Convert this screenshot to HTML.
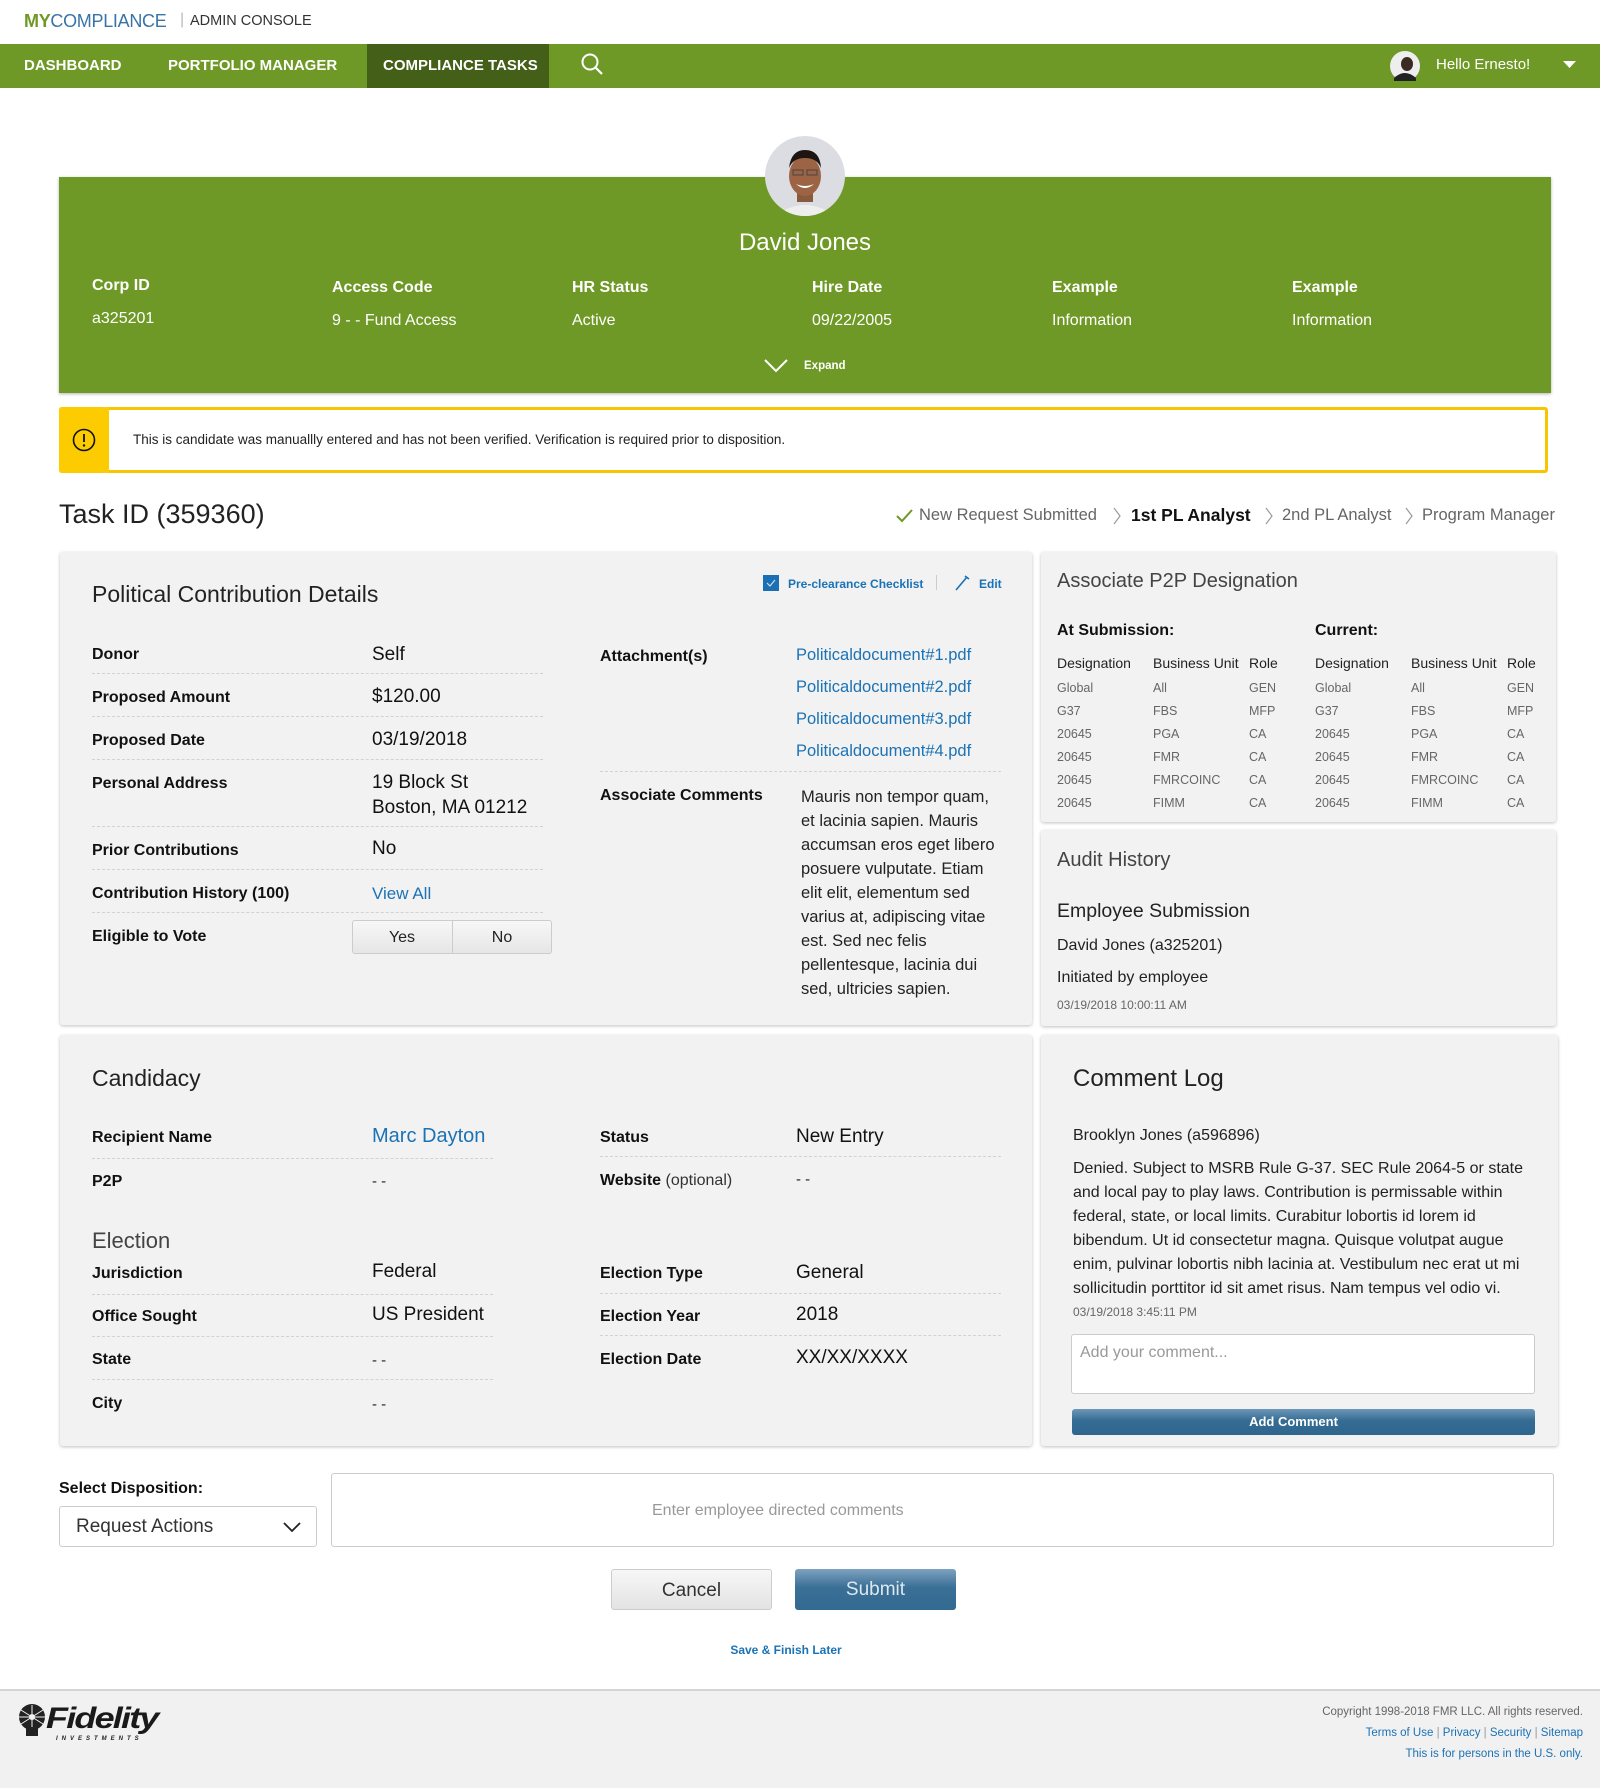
<!DOCTYPE html>
<html><head><meta charset="utf-8"><style>
*{margin:0;padding:0;box-sizing:border-box}
body{width:1600px;height:1788px;position:relative;background:#fff;font-family:"Liberation Sans",sans-serif;color:#222;overflow:hidden}
.a{position:absolute;white-space:nowrap;line-height:1}
.nav{position:absolute;left:0;top:44px;width:1600px;height:44px;background:#6f9926}
.nv{color:#fff;font-weight:bold;font-size:15px;top:15px}
.card{position:absolute;background:#f2f2f2;border-radius:3px;box-shadow:0 1px 3px rgba(0,0,0,.25)}
.lb{font-weight:bold;font-size:16px;color:#111}
.vl{font-size:19px;color:#111}
.dl{position:absolute;height:0;border-top:1px dashed #d2d2d2}
.gl{font-size:12.5px;color:#666}
.blue{color:#1b72b5}
.wl{color:#fff;font-size:16px}
</style></head><body>

<div class="a" style="left:24px;top:12px;font-size:18px;letter-spacing:-0.3px"><span style="color:#6f9926;font-weight:bold">MY</span><span style="color:#3a74a6">COMPLIANCE</span></div>
<div class="a" style="left:180px;top:12px;font-size:16px;color:#bbb">|</div>
<div class="a" style="left:190px;top:14px;font-size:14.5px;color:#333">ADMIN CONSOLE</div>

<div class="nav"></div>
<div class="a" style="left:367px;top:44px;width:182px;height:44px;background:#445f17"></div>
<div class="a nv" style="left:24px;top:58px">DASHBOARD</div>
<div class="a nv" style="left:168px;top:58px">PORTFOLIO MANAGER</div>
<div class="a nv" style="left:383px;top:58px">COMPLIANCE TASKS</div>
<svg class="a" style="left:580px;top:52px" width="26" height="26" viewBox="0 0 26 26"><circle cx="10" cy="10" r="7.5" fill="none" stroke="#fff" stroke-width="2"/><line x1="15.5" y1="15.5" x2="22" y2="22" stroke="#fff" stroke-width="2.2"/></svg>
<svg class="a" style="left:1390px;top:51px" width="30" height="30" viewBox="0 0 30 30"><circle cx="15" cy="15" r="15" fill="#eee"/><ellipse cx="17" cy="13" rx="6" ry="7" fill="#3a2a22"/><path d="M4 27 Q15 17 26 27 L26 30 L4 30Z" fill="#222"/></svg>
<div class="a" style="left:1436px;top:57px;font-size:15px;color:#fff">Hello Ernesto!</div>
<svg class="a" style="left:1563px;top:61px" width="13" height="8"><path d="M0 0 L13 0 L6.5 7Z" fill="#fff"/></svg>

<div class="a" style="left:59px;top:177px;width:1492px;height:216px;background:#6f9926;box-shadow:0 1px 3px rgba(0,0,0,.3)"></div>
<svg class="a" style="left:765px;top:136px" width="80" height="80" viewBox="0 0 80 80"><defs><clipPath id="c"><circle cx="40" cy="40" r="40"/></clipPath></defs><g clip-path="url(#c)"><rect width="80" height="80" fill="#dcdde3"/><path d="M10 80 Q40 58 70 80Z" fill="#eee"/><rect x="32" y="52" width="16" height="14" fill="#8a5a3c"/><ellipse cx="40" cy="40" rx="16" ry="20" fill="#9c6444"/><path d="M24 32 Q26 14 40 14 Q55 14 56 32 Q52 22 40 22 Q28 22 24 32Z" fill="#1e1512"/><path d="M31 48 Q40 56 49 48 Q40 52 31 48Z" fill="#fff"/><rect x="28" y="34" width="10" height="5" fill="none" stroke="#444" stroke-width="1"/><rect x="42" y="34" width="10" height="5" fill="none" stroke="#444" stroke-width="1"/></g></svg>
<div class="a" style="left:0;width:1610px;text-align:center;top:231px;font-size:24px;color:#fff">David Jones</div>
<div class="a wl" style="left:92px;top:278px;font-weight:bold">Corp ID</div>
<div class="a wl" style="left:92px;top:311px">a325201</div>
<div class="a wl" style="left:332px;top:280px;font-weight:bold">Access Code</div>
<div class="a wl" style="left:332px;top:313px">9 - - Fund Access</div>
<div class="a wl" style="left:572px;top:280px;font-weight:bold">HR Status</div>
<div class="a wl" style="left:572px;top:313px">Active</div>
<div class="a wl" style="left:812px;top:280px;font-weight:bold">Hire Date</div>
<div class="a wl" style="left:812px;top:313px">09/22/2005</div>
<div class="a wl" style="left:1052px;top:280px;font-weight:bold">Example</div>
<div class="a wl" style="left:1052px;top:313px">Information</div>
<div class="a wl" style="left:1292px;top:280px;font-weight:bold">Example</div>
<div class="a wl" style="left:1292px;top:313px">Information</div>
<svg class="a" style="left:764px;top:359px" width="24" height="14"><path d="M1 1 L12 12 L23 1" fill="none" stroke="#fff" stroke-width="2"/></svg>
<div class="a" style="left:804px;top:361px;font-size:11.5px;font-weight:bold;color:#fff">Expand</div>

<div class="a" style="left:59px;top:407px;width:1489px;height:66px;border:3px solid #f7c600;border-radius:3px;background:#fff"></div>
<div class="a" style="left:59px;top:407px;width:50px;height:66px;background:#fccb00;border-radius:3px 0 0 3px"></div>
<svg class="a" style="left:72px;top:428px" width="24" height="24"><circle cx="12" cy="12" r="10.5" fill="none" stroke="#111" stroke-width="1.6"/><line x1="12" y1="6" x2="12" y2="14" stroke="#111" stroke-width="1.8"/><circle cx="12" cy="17.5" r="1.2" fill="#111"/></svg>
<div class="a" style="left:133px;top:433px;font-size:13.5px;color:#222">This is candidate was manuallly entered and has not been verified. Verification is required prior to disposition.</div>

<div class="a" style="left:59px;top:501px;font-size:27px;color:#222">Task ID (359360)</div>
<svg class="a" style="left:896px;top:509px" width="17" height="14"><path d="M1 7 L6 12 L16 1" fill="none" stroke="#6f9926" stroke-width="2"/></svg>
<div class="a" style="left:919px;top:507px;font-size:16.5px;color:#666">New Request Submitted</div>
<svg class="a" style="left:1113px;top:507px" width="9" height="18"><path d="M1 1 L7 9 L1 17" fill="none" stroke="#999" stroke-width="1.2"/></svg>
<div class="a" style="left:1131px;top:507px;font-size:17.5px;color:#111;font-weight:bold">1st PL Analyst</div>
<svg class="a" style="left:1265px;top:507px" width="9" height="18"><path d="M1 1 L7 9 L1 17" fill="none" stroke="#999" stroke-width="1.2"/></svg>
<div class="a" style="left:1282px;top:507px;font-size:16.5px;color:#666">2nd PL Analyst</div>
<svg class="a" style="left:1405px;top:507px" width="9" height="18"><path d="M1 1 L7 9 L1 17" fill="none" stroke="#999" stroke-width="1.2"/></svg>
<div class="a" style="left:1422px;top:507px;font-size:16.5px;color:#666">Program Manager</div>

<div class="card" style="left:60px;top:552px;width:972px;height:473px"></div>
<div class="a" style="left:92px;top:583px;font-size:23px;color:#222">Political Contribution Details</div>
<svg class="a" style="left:763px;top:575px" width="16" height="16"><rect width="16" height="16" fill="#1b6fb3"/><path d="M4 8 L7 11 L12 5" fill="none" stroke="#cfe0ef" stroke-width="1.2"/></svg>
<div class="a blue" style="left:788px;top:578px;font-size:12px;font-weight:bold">Pre-clearance Checklist</div>
<div class="a" style="left:936px;top:575px;width:1px;height:15px;background:#ccc"></div>
<svg class="a" style="left:954px;top:574px" width="16" height="17"><path d="M2 16 L13 3 M11 2 L15 5" stroke="#1b6fb3" stroke-width="1.6" fill="none"/></svg>
<div class="a blue" style="left:979px;top:578px;font-size:12px;font-weight:bold">Edit</div>

<div class="a lb" style="left:92px;top:647px">Donor</div><div class="a vl" style="left:372px;top:645px">Self</div>
<div class="dl" style="left:92px;top:673px;width:451px"></div>
<div class="a lb" style="left:92px;top:690px">Proposed Amount</div><div class="a vl" style="left:372px;top:687px">$120.00</div>
<div class="dl" style="left:92px;top:716px;width:451px"></div>
<div class="a lb" style="left:92px;top:733px">Proposed Date</div><div class="a vl" style="left:372px;top:730px">03/19/2018</div>
<div class="dl" style="left:92px;top:759px;width:451px"></div>
<div class="a lb" style="left:92px;top:776px">Personal Address</div><div class="a vl" style="left:372px;line-height:25px;top:770px">19 Block St<br>Boston, MA 01212</div>
<div class="dl" style="left:92px;top:826px;width:451px"></div>
<div class="a lb" style="left:92px;top:843px">Prior Contributions</div><div class="a vl" style="left:372px;top:839px">No</div>
<div class="dl" style="left:92px;top:869px;width:451px"></div>
<div class="a lb" style="left:92px;top:886px">Contribution History (100)</div><div class="a blue" style="left:372px;top:885px;font-size:17px">View All</div>
<div class="dl" style="left:92px;top:912px;width:451px"></div>
<div class="a lb" style="left:92px;top:929px">Eligible to Vote</div>
<div class="a" style="left:352px;top:920px;width:200px;height:34px;border:1px solid #ccc;border-radius:3px;background:linear-gradient(#f7f7f7,#e6e6e6)"></div>
<div class="a" style="left:452px;top:921px;width:1px;height:32px;background:#ccc"></div>
<div class="a" style="left:352px;top:930px;width:100px;text-align:center;font-size:16px">Yes</div>
<div class="a" style="left:452px;top:930px;width:100px;text-align:center;font-size:16px">No</div>

<div class="a lb" style="left:600px;top:649px">Attachment(s)</div>
<div class="a blue" style="left:796px;top:645px;font-size:16.5px"><div style="height:32px;line-height:20px">Politicaldocument#1.pdf</div><div style="height:32px;line-height:20px">Politicaldocument#2.pdf</div><div style="height:32px;line-height:20px">Politicaldocument#3.pdf</div><div style="height:32px;line-height:20px">Politicaldocument#4.pdf</div></div>
<div class="dl" style="left:600px;top:771px;width:401px"></div>
<div class="a lb" style="left:600px;top:788px">Associate Comments</div>
<div class="a" style="left:801px;top:785px;font-size:16.5px;line-height:24px;color:#222">Mauris non tempor quam,<br>et lacinia sapien. Mauris<br>accumsan eros eget libero<br>posuere vulputate. Etiam<br>elit elit, elementum sed<br>varius at, adipiscing vitae<br>est. Sed nec felis<br>pellentesque, lacinia dui<br>sed, ultricies sapien.</div>

<div class="card" style="left:1041px;top:552px;width:515px;height:270px"></div>
<div class="a" style="left:1057px;top:571px;font-size:20px;color:#444">Associate P2P Designation</div>
<div class="a lb" style="left:1057px;top:623px">At Submission:</div>
<div class="a lb" style="left:1315px;top:623px">Current:</div>
<div class="a" style="left:1057px;top:656px;font-size:14px">Designation</div>
<div class="a" style="left:1153px;top:656px;font-size:14px">Business Unit</div>
<div class="a" style="left:1249px;top:656px;font-size:14px">Role</div>
<div class="a" style="left:1315px;top:656px;font-size:14px">Designation</div>
<div class="a" style="left:1411px;top:656px;font-size:14px">Business Unit</div>
<div class="a" style="left:1507px;top:656px;font-size:14px">Role</div>
<div class="a gl" style="left:1057px;top:677px;line-height:23px">Global<br>G37<br>20645<br>20645<br>20645<br>20645</div>
<div class="a gl" style="left:1153px;top:677px;line-height:23px">All<br>FBS<br>PGA<br>FMR<br>FMRCOINC<br>FIMM</div>
<div class="a gl" style="left:1249px;top:677px;line-height:23px">GEN<br>MFP<br>CA<br>CA<br>CA<br>CA</div>
<div class="a gl" style="left:1315px;top:677px;line-height:23px">Global<br>G37<br>20645<br>20645<br>20645<br>20645</div>
<div class="a gl" style="left:1411px;top:677px;line-height:23px">All<br>FBS<br>PGA<br>FMR<br>FMRCOINC<br>FIMM</div>
<div class="a gl" style="left:1507px;top:677px;line-height:23px">GEN<br>MFP<br>CA<br>CA<br>CA<br>CA</div>

<div class="card" style="left:1041px;top:830px;width:515px;height:196px"></div>
<div class="a" style="left:1057px;top:850px;font-size:20px;color:#444">Audit History</div>
<div class="a" style="left:1057px;top:902px;font-size:19.5px;color:#222">Employee Submission</div>
<div class="a" style="left:1057px;top:938px;font-size:16px">David Jones (a325201)</div>
<div class="a" style="left:1057px;top:970px;font-size:16px">Initiated by employee</div>
<div class="a" style="left:1057px;top:999px;font-size:12px;color:#666">03/19/2018 10:00:11 AM</div>

<div class="card" style="left:60px;top:1035px;width:972px;height:411px"></div>
<div class="a" style="left:92px;top:1067px;font-size:23px;color:#222">Candidacy</div>
<div class="a lb" style="left:92px;top:1130px">Recipient Name</div><div class="a blue" style="left:372px;top:1126px;font-size:20px">Marc Dayton</div>
<div class="dl" style="left:92px;top:1158px;width:401px"></div>
<div class="a lb" style="left:92px;top:1174px">P2P</div><div class="a" style="left:372px;top:1174px;font-size:15px">- -</div>
<div class="a lb" style="left:600px;top:1130px">Status</div><div class="a vl" style="left:796px;top:1127px">New Entry</div>
<div class="dl" style="left:600px;top:1156px;width:401px"></div>
<div class="a lb" style="left:600px;top:1173px">Website <span style="font-weight:normal;color:#333">(optional)</span></div><div class="a" style="left:796px;top:1172px;font-size:15px">- -</div>
<div class="a" style="left:92px;top:1230px;font-size:22px;color:#444">Election</div>
<div class="a lb" style="left:92px;top:1266px">Jurisdiction</div><div class="a vl" style="left:372px;top:1262px">Federal</div>
<div class="dl" style="left:92px;top:1294px;width:401px"></div>
<div class="a lb" style="left:92px;top:1309px">Office Sought</div><div class="a vl" style="left:372px;top:1305px">US President</div>
<div class="dl" style="left:92px;top:1336px;width:401px"></div>
<div class="a lb" style="left:92px;top:1352px">State</div><div class="a" style="left:372px;top:1353px;font-size:15px">- -</div>
<div class="dl" style="left:92px;top:1379px;width:401px"></div>
<div class="a lb" style="left:92px;top:1396px">City</div><div class="a" style="left:372px;top:1397px;font-size:15px">- -</div>
<div class="a lb" style="left:600px;top:1266px">Election Type</div><div class="a vl" style="left:796px;top:1263px">General</div>
<div class="dl" style="left:600px;top:1293px;width:401px"></div>
<div class="a lb" style="left:600px;top:1309px">Election Year</div><div class="a vl" style="left:796px;top:1305px">2018</div>
<div class="dl" style="left:600px;top:1335px;width:401px"></div>
<div class="a lb" style="left:600px;top:1352px">Election Date</div><div class="a vl" style="left:796px;top:1348px">XX/XX/XXXX</div>

<div class="card" style="left:1041px;top:1035px;width:517px;height:411px"></div>
<div class="a" style="left:1073px;top:1067px;font-size:24px;color:#222">Comment Log</div>
<div class="a" style="left:1073px;top:1128px;font-size:16px">Brooklyn Jones (a596896)</div>
<div class="a" style="left:1073px;top:1157px;font-size:16px;line-height:24px;color:#222">Denied. Subject to MSRB Rule G-37. SEC Rule 2064-5 or state<br>and local pay to play laws. Contribution is permissable within<br>federal, state, or local limits. Curabitur lobortis id lorem id<br>bibendum. Ut id consectetur magna. Quisque volutpat augue<br>enim, pulvinar lobortis nibh lacinia at. Vestibulum nec erat ut mi<br>sollicitudin porttitor id sit amet risus. Nam tempus vel odio vi.</div>
<div class="a" style="left:1073px;top:1306px;font-size:12px;color:#666">03/19/2018 3:45:11 PM</div>
<div class="a" style="left:1071px;top:1334px;width:464px;height:60px;background:#fff;border:1px solid #ccc;border-radius:3px"></div>
<div class="a" style="left:1080px;top:1345px;font-size:16px;color:#999">Add your comment...</div>
<div class="a" style="left:1072px;top:1409px;width:463px;height:26px;border-radius:3px;background:linear-gradient(#6d97b8,#356c93 45%,#2f668e);color:#fff;font-weight:bold;font-size:13px;text-align:center;line-height:26px;padding-right:20px">Add Comment</div>

<div class="a lb" style="left:59px;top:1481px">Select Disposition:</div>
<div class="a" style="left:59px;top:1506px;width:258px;height:41px;border:1px solid #ccc;border-radius:3px;background:#fff"></div>
<div class="a" style="left:76px;top:1517px;font-size:19px;color:#333">Request Actions</div>
<svg class="a" style="left:283px;top:1521px" width="18" height="12"><path d="M1 2 L9 10 L17 2" fill="none" stroke="#222" stroke-width="1.8"/></svg>
<div class="a" style="left:331px;top:1473px;width:1223px;height:74px;border:1px solid #ccc;border-radius:3px;background:#fff"></div>
<div class="a" style="left:652px;top:1503px;font-size:16px;color:#999">Enter employee directed comments</div>
<div class="a" style="left:611px;top:1569px;width:161px;height:41px;border:1px solid #ccc;border-radius:3px;background:linear-gradient(#f7f7f7,#e3e3e3);text-align:center;line-height:41px;font-size:19px;color:#333">Cancel</div>
<div class="a" style="left:795px;top:1569px;width:161px;height:41px;border-radius:3px;background:linear-gradient(#7ea2bf,#3a6f96 45%,#336a92);text-align:center;line-height:42px;font-size:19px;color:#dfe8ef">Submit</div>
<div class="a blue" style="left:686px;top:1644px;width:200px;text-align:center;font-size:12px;font-weight:bold">Save &amp; Finish Later</div>

<div class="a" style="left:0;top:1689px;width:1600px;height:99px;background:#f1f1f1;border-top:2px solid #d5d5d5"></div>
<svg class="a" style="left:15px;top:1703px" width="34" height="34" viewBox="0 0 34 34"><circle cx="17" cy="14" r="13" fill="#222"/><path d="M17 2 L17 26 M6 7 L28 21 M6 21 L28 7 M4 14 L30 14" stroke="#f1f1f1" stroke-width="1"/><circle cx="17" cy="14" r="3" fill="#f1f1f1"/><rect x="11" y="24" width="12" height="9" fill="#222"/></svg>
<div class="a" style="left:46px;top:1704px;font-size:30px;font-weight:bold;font-style:italic;color:#1a1a1a;letter-spacing:-1.5px;transform:scaleX(1.2);transform-origin:left">Fidelity</div>
<div class="a" style="left:56px;top:1736px;font-size:6px;font-weight:bold;font-style:italic;letter-spacing:4px;color:#222">INVESTMENTS</div>
<div class="a" style="right:17px;top:1707px;font-size:11.5px;color:#666">Copyright 1998-2018 FMR LLC. All rights reserved.</div>
<div class="a blue" style="right:17px;top:1728px;font-size:11.5px">Terms of Use <span style="color:#999">|</span> Privacy <span style="color:#999">|</span> Security <span style="color:#999">|</span> Sitemap</div>
<div class="a blue" style="right:17px;top:1749px;font-size:11.5px">This is for persons in the U.S. only.</div>
</body></html>
